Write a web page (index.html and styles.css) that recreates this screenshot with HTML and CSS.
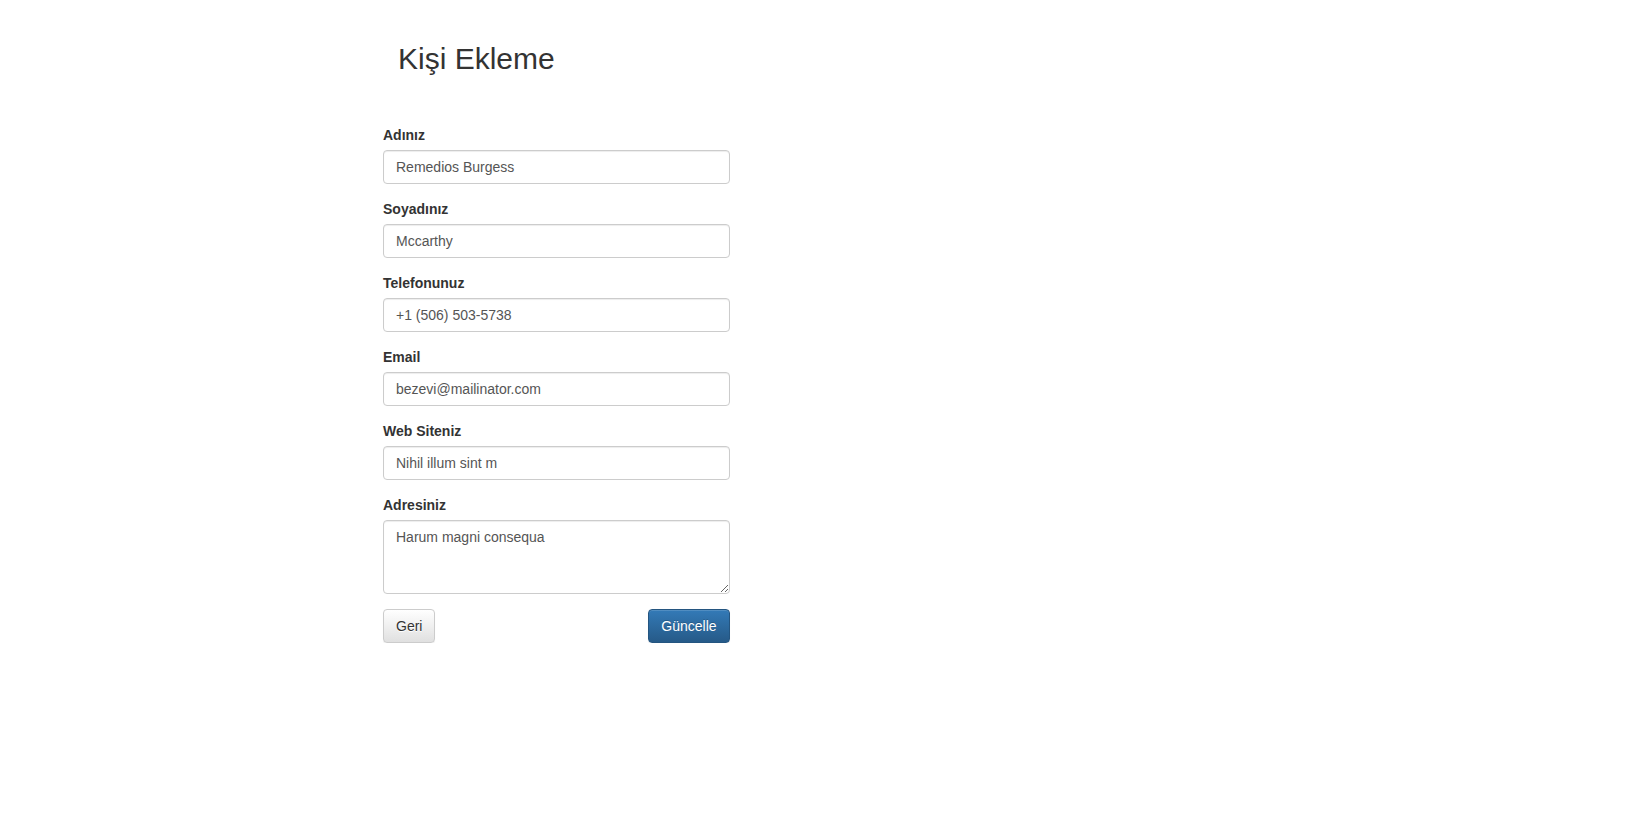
FILE: index.html
```html
<!DOCTYPE html>
<html lang="tr">
<head>
<meta charset="utf-8">
<title>Kişi Ekleme</title>
<link rel="stylesheet" href="styles.css">
</head>
<body>
<div class="page">
  <h2 class="title">Kişi Ekleme</h2>
  <form class="form">
    <div class="form-group">
      <label class="label">Adınız</label>
      <input class="control" type="text" value="Remedios Burgess">
    </div>
    <div class="form-group">
      <label class="label">Soyadınız</label>
      <input class="control" type="text" value="Mccarthy">
    </div>
    <div class="form-group">
      <label class="label">Telefonunuz</label>
      <input class="control" type="text" value="+1 (506) 503-5738">
    </div>
    <div class="form-group">
      <label class="label">Email</label>
      <input class="control" type="text" value="bezevi@mailinator.com">
    </div>
    <div class="form-group">
      <label class="label">Web Siteniz</label>
      <input class="control" type="text" value="Nihil illum sint m">
    </div>
    <div class="form-group">
      <label class="label">Adresiniz</label>
      <textarea class="control area" rows="3">Harum magni consequa</textarea>
    </div>
    <div class="actions">
      <button type="button" class="btn btn-default">Geri</button>
      <button type="button" class="btn btn-primary">Güncelle</button>
    </div>
  </form>
</div>
</body>
</html>
```
FILE: styles.css
```css
* { box-sizing: border-box; }
html, body {
  margin: 0;
  background: #fff;
  font-family: "Liberation Sans", Arial, Helvetica, sans-serif;
  font-size: 14px;
  line-height: 20px;
  color: #333;
}
.page {
  width: 347px;
  margin-left: 383px;
  padding-top: 42px;
}
.title {
  margin: 0 0 50px 15px;
  font-size: 30px;
  line-height: 33px;
  font-weight: 500;
  color: #333;
}
.form-group { margin-bottom: 15px; }
.label {
  display: block;
  margin-bottom: 5px;
  font-weight: bold;
  font-size: 14px;
  line-height: 20px;
  color: #333;
}
.control {
  display: block;
  width: 100%;
  height: 34px;
  padding: 6px 12px;
  font-family: inherit;
  font-size: 14px;
  line-height: 20px;
  color: #555;
  background: #fff;
  border: 1px solid #ccc;
  border-radius: 4px;
  box-shadow: inset 0 1px 1px rgba(0,0,0,.075);
  margin: 0;
}
.area {
  height: 74px;
  resize: vertical;
}
.actions {
  display: flex;
  justify-content: space-between;
}
.btn {
  height: 34px;
  padding: 6px 12px;
  font-family: inherit;
  font-size: 14px;
  line-height: 20px;
  border: 1px solid transparent;
  border-radius: 4px;
  cursor: pointer;
  box-shadow: inset 0 1px 0 rgba(255,255,255,.15), 0 1px 1px rgba(0,0,0,.075);
}
.btn-default {
  color: #333;
  text-shadow: 0 1px 0 #fff;
  background: linear-gradient(to bottom, #fff 0, #e0e0e0 100%);
  border-color: #ccc;
}
.btn-primary {
  min-width: 82px;
  color: #fff;
  text-shadow: 0 -1px 0 rgba(0,0,0,.2);
  background: linear-gradient(to bottom, #337ab7 0, #265a88 100%);
  border-color: #245580;
}
```
